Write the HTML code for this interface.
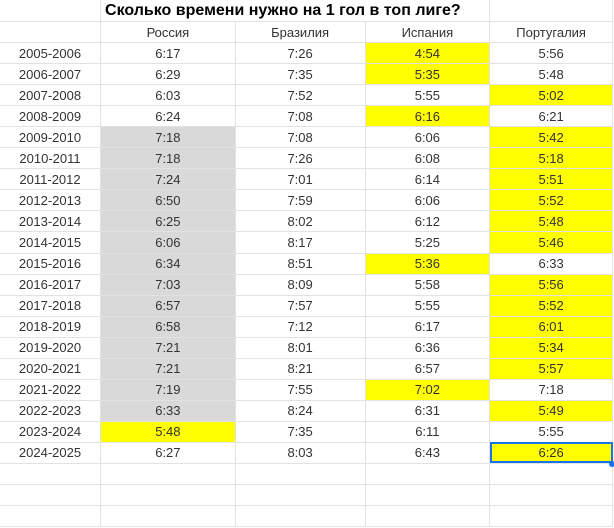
<!DOCTYPE html>
<html><head><meta charset="utf-8"><style>
body{margin:0;width:614px;height:528px;overflow:hidden;background:#fff;font-family:"Liberation Sans",Arial,sans-serif;}
table{border-collapse:collapse;table-layout:fixed;position:absolute;left:-1px;top:-1px;}
td{border:1.5px solid #e2e2e2;height:20.05px;padding:0;text-align:center;font-size:13px;color:#333;white-space:nowrap;overflow:visible;}
.y{background:#ffff00;}
.g{background:#d9d9d9;}
.t{font-weight:bold;font-size:16px;color:#000;text-align:left;padding-left:4px;}
.sel{outline:2px solid #1a73e8;outline-offset:-2px;}
</style></head><body>
<table>
<colgroup><col style="width:102px"><col style="width:135px"><col style="width:130px"><col style="width:125px"><col style="width:124px"></colgroup>
<tr><td style="height:21px"></td><td colspan="3" class="t" style="height:21px">Сколько времени нужно на 1 гол в топ лиге?</td><td style="height:21px"></td></tr>
<tr><td></td><td>Россия</td><td>Бразилия</td><td>Испания</td><td>Португалия</td></tr>
<tr><td>2005-2006</td><td>6:17</td><td>7:26</td><td class="y">4:54</td><td>5:56</td></tr>
<tr><td>2006-2007</td><td>6:29</td><td>7:35</td><td class="y">5:35</td><td>5:48</td></tr>
<tr><td>2007-2008</td><td>6:03</td><td>7:52</td><td>5:55</td><td class="y">5:02</td></tr>
<tr><td>2008-2009</td><td>6:24</td><td>7:08</td><td class="y">6:16</td><td>6:21</td></tr>
<tr><td>2009-2010</td><td class="g">7:18</td><td>7:08</td><td>6:06</td><td class="y">5:42</td></tr>
<tr><td>2010-2011</td><td class="g">7:18</td><td>7:26</td><td>6:08</td><td class="y">5:18</td></tr>
<tr><td>2011-2012</td><td class="g">7:24</td><td>7:01</td><td>6:14</td><td class="y">5:51</td></tr>
<tr><td>2012-2013</td><td class="g">6:50</td><td>7:59</td><td>6:06</td><td class="y">5:52</td></tr>
<tr><td>2013-2014</td><td class="g">6:25</td><td>8:02</td><td>6:12</td><td class="y">5:48</td></tr>
<tr><td>2014-2015</td><td class="g">6:06</td><td>8:17</td><td>5:25</td><td class="y">5:46</td></tr>
<tr><td>2015-2016</td><td class="g">6:34</td><td>8:51</td><td class="y">5:36</td><td>6:33</td></tr>
<tr><td>2016-2017</td><td class="g">7:03</td><td>8:09</td><td>5:58</td><td class="y">5:56</td></tr>
<tr><td>2017-2018</td><td class="g">6:57</td><td>7:57</td><td>5:55</td><td class="y">5:52</td></tr>
<tr><td>2018-2019</td><td class="g">6:58</td><td>7:12</td><td>6:17</td><td class="y">6:01</td></tr>
<tr><td>2019-2020</td><td class="g">7:21</td><td>8:01</td><td>6:36</td><td class="y">5:34</td></tr>
<tr><td>2020-2021</td><td class="g">7:21</td><td>8:21</td><td>6:57</td><td class="y">5:57</td></tr>
<tr><td>2021-2022</td><td class="g">7:19</td><td>7:55</td><td class="y">7:02</td><td>7:18</td></tr>
<tr><td>2022-2023</td><td class="g">6:33</td><td>8:24</td><td>6:31</td><td class="y">5:49</td></tr>
<tr><td>2023-2024</td><td class="y">5:48</td><td>7:35</td><td>6:11</td><td>5:55</td></tr>
<tr><td>2024-2025</td><td>6:27</td><td>8:03</td><td>6:43</td><td class="y sel">6:26</td></tr>
<tr><td></td><td></td><td></td><td></td><td></td></tr>
<tr><td></td><td></td><td></td><td></td><td></td></tr>
<tr><td></td><td></td><td></td><td></td><td></td></tr>
</table>
<div style="position:absolute;left:609px;top:461px;width:6px;height:6px;border-radius:50%;background:#1a73e8"></div>
</body></html>
